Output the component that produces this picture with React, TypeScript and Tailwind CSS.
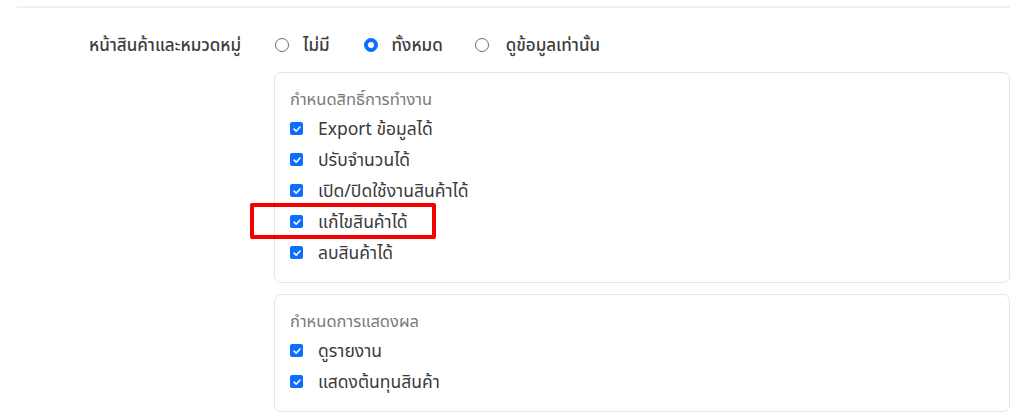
const Radio = ({ checked }: { checked?: boolean }) =>
  checked ? (
    <span className="flex h-[14px] w-[14px] shrink-0 items-center justify-center rounded-full border border-[#0d6efd] bg-[#0d6efd]">
      <span className="h-[6px] w-[6px] rounded-full bg-white" />
    </span>
  ) : (
    <span className="h-[14px] w-[14px] shrink-0 rounded-full border border-[#6b6b6b] bg-white" />
  );

const Check = () => (
  <span className="flex h-[13px] w-[13px] shrink-0 items-center justify-center rounded-[2px] bg-[#0d6efd]">
    <svg viewBox="0 0 12 12" className="h-[10px] w-[10px]">
      <path d="M2.5 6.2 5 8.6 9.6 3.6" fill="none" stroke="white" strokeWidth="1.9" strokeLinecap="round" strokeLinejoin="round" />
    </svg>
  </span>
);

type Item = { label: string; marked?: boolean };

const Group = ({ title, items }: { title: string; items: Item[] }) => (
  <div className="rounded-[7px] border border-[#e3e5e8] bg-white pl-[15px] pt-[15px] pb-[14px]">
    <div className="text-[16.5px] leading-[22px] text-[#7a7a7a]">{title}</div>
    <div className="mt-[3px] flex flex-col">
      {items.map((it) => (
        <div key={it.label} className="relative flex h-[31px] items-center">
          <Check />
          <span className="ml-[15px] text-[17.5px] text-[#3a3a3a]">{it.label}</span>
          {it.marked && (
            <span className="absolute left-[-40px] top-[-3px] h-[36px] w-[186px] rounded-[2px] border-[4px] border-[#f40000]" />
          )}
        </div>
      ))}
    </div>
  </div>
);

export default function App() {
  return (
    <div className="h-[419px] w-[1024px] overflow-hidden bg-white font-['Noto_Sans','Noto_Sans_Thai',sans-serif]">
      <div className="mx-[17px] mt-[6px] border-t-2 border-[#f1f1f1] w-[993px]" />
      <div className="mt-[24px] flex">
        <div className="w-[241px] pt-[1px] text-right text-[17px] font-medium leading-[24px] text-[#3d3d3d]">
          หน้าสินค้าและหมวดหมู่
        </div>
        <div className="ml-[33px] w-[736px]">
          <div className="flex h-[26px] items-center text-[17px] font-medium text-[#3d3d3d]">
            <div className="ml-[1px] flex items-center gap-[14px]">
              <Radio />
              <span>ไม่มี</span>
            </div>
            <div className="ml-[34px] flex items-center gap-[14px]">
              <Radio checked />
              <span>ทั้งหมด</span>
            </div>
            <div className="ml-[32px] flex items-center gap-[17px]">
              <Radio />
              <span>ดูข้อมูลเท่านั้น</span>
            </div>
          </div>
          <div className="mt-[14px] flex flex-col gap-[11px]">
            <Group
              title="กำหนดสิทธิ์การทำงาน"
              items={[
                { label: "Export ข้อมูลได้" },
                { label: "ปรับจำนวนได้" },
                { label: "เปิด/ปิดใช้งานสินค้าได้" },
                { label: "แก้ไขสินค้าได้", marked: true },
                { label: "ลบสินค้าได้" },
              ]}
            />
            <Group
              title="กำหนดการแสดงผล"
              items={[{ label: "ดูรายงาน" }, { label: "แสดงต้นทุนสินค้า" }]}
            />
          </div>
        </div>
      </div>
    </div>
  );
}
